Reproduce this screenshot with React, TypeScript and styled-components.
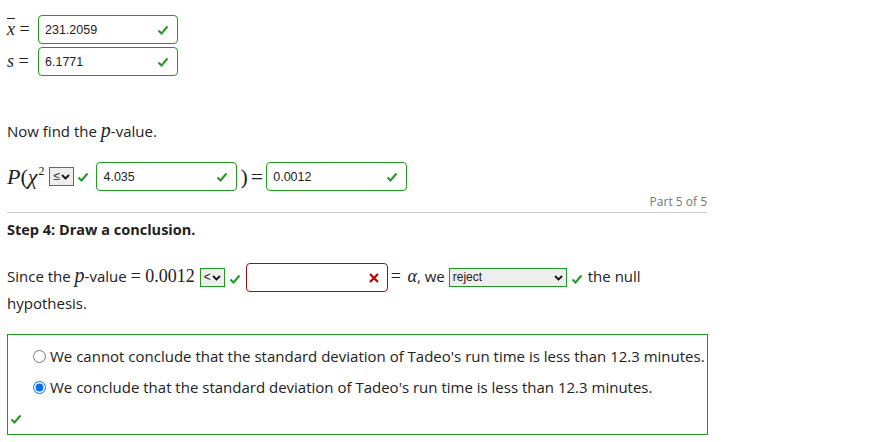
import React from "react";
import styled, { createGlobalStyle } from "styled-components";

const Global = createGlobalStyle`
  body {
    margin: 0;
    background: #fff;
    font-family: "Open Sans", "Noto Sans", sans-serif;
    color: #222;
  }
`;

const GREEN = "#1f9a1f";

const Check = ({ size = 12 }: { size?: number }) => (
  <svg width={size} height={size} viewBox="0 0 12 12" style={{ verticalAlign: "middle" }}>
    <path d="M1.5 6.5 L4.5 9.5 L10.5 2.5" fill="none" stroke={GREEN} strokeWidth="2" />
  </svg>
);

const Cross = () => (
  <svg width="10" height="10" viewBox="0 0 10 10">
    <path d="M1 1 L9 9 M9 1 L1 9" stroke="#b00" strokeWidth="2.2" />
  </svg>
);

const Caret = () => (
  <svg width="9" height="6" viewBox="0 0 9 6">
    <path d="M1 1 L4.5 4.5 L8 1" fill="none" stroke="#111" strokeWidth="1.8" />
  </svg>
);

function App() {
  return (
    <Page>
      <Global />
      <StatRow>
        <Math>
          <Over>x</Over> =
        </Math>
        <AnswerBox $w={140}>
          <span>231.2059</span>
          <Check />
        </AnswerBox>
      </StatRow>
      <StatRow>
        <Math>
          <i>s</i> =
        </Math>
        <AnswerBox $w={140}>
          <span>6.1771</span>
          <Check />
        </AnswerBox>
      </StatRow>

      <Prompt>
        Now find the <Var>p</Var>-value.
      </Prompt>

      <ProbRow>
        <BigMath>
          <i>P</i>(<i>χ</i>
          <Sup>2</Sup>
        </BigMath>
        <Select $w={25}>
          <span>≤</span>
          <Caret />
        </Select>
        <Check />
        <Gap $w={1} />
        <AnswerBox $w={141}>
          <span>4.035</span>
          <Check />
        </AnswerBox>
        <BigMath>)</BigMath>
        <BigMath>=</BigMath>
        <AnswerBox $w={141}>
          <span>0.0012</span>
          <Check />
        </AnswerBox>
      </ProbRow>

      <PartLabel>Part 5 of 5</PartLabel>
      <Rule />

      <StepTitle>Step 4: Draw a conclusion.</StepTitle>

      <Sentence>
        Since the <Var>p</Var>-value<MathInline $lead={4}>= 0.0012</MathInline>
        <Select $w={25} $gap={5}>
          <span>&lt;</span>
          <Caret />
        </Select>
        <Tick>
          <Check />
        </Tick>
        <AnswerBox $w={142} $bad $inline>
          <span />
          <Cross />
        </AnswerBox>
        <MathInline>
          = <Alpha>α</Alpha>
        </MathInline>
        , we
        <Select $w={118} $gap={4}>
          <span>reject</span>
          <Caret />
        </Select>
        <Tick>
          <Check />
        </Tick>
        the null hypothesis.
      </Sentence>

      <ChoiceBox>
        <Choice>
          <Radio type="radio" name="c" readOnly />
          We cannot conclude that the standard deviation of Tadeo's run time is less than 12.3 minutes.
        </Choice>
        <Choice>
          <Radio type="radio" name="c" readOnly checked />
          We conclude that the standard deviation of Tadeo's run time is less than 12.3 minutes.
        </Choice>
        <BoxCheck>
          <Check />
        </BoxCheck>
      </ChoiceBox>
    </Page>
  );
}

const Page = styled.div`
  width: 700px;
  padding: 15px 0 0 7px;
`;

const StatRow = styled.div`
  display: flex;
  align-items: center;
  height: 29px;
  margin-bottom: 3px;
`;

const Math = styled.span`
  font-family: "Liberation Serif", serif;
  font-size: 18px;
  width: 31px;
  white-space: nowrap;
  i {
    font-style: italic;
  }
`;

const Over = styled.i`
  text-decoration: overline;
`;

const AnswerBox = styled.div<{ $w: number; $bad?: boolean; $inline?: boolean }>`
  box-sizing: border-box;
  width: ${(p) => p.$w}px;
  height: 29px;
  border: 1px solid ${(p) => (p.$bad ? "#9a1010" : GREEN)};
  border-radius: 4px;
  display: ${(p) => (p.$inline ? "inline-flex" : "flex")};
  vertical-align: middle;
  margin: ${(p) => (p.$inline ? "-2px 2px -2px 0" : "0")};
  align-items: center;
  justify-content: space-between;
  padding: 0 8px 0 6px;
  font-family: "Liberation Sans", Arial, sans-serif;
  font-size: 12.5px;
  color: #222;
`;

const Prompt = styled.div`
  margin-top: 44px;
  font-size: 15px;
  line-height: 20px;
`;

const Var = styled.i`
  font-family: "Liberation Serif", serif;
  font-size: 20px;
`;

const ProbRow = styled.div`
  display: flex;
  align-items: center;
  margin-top: 21px;
  height: 29px;
  gap: 3px;
`;

const BigMath = styled.span`
  font-family: "Liberation Serif", serif;
  font-size: 22px;
  white-space: nowrap;
  i {
    font-style: italic;
  }
`;

const Sup = styled.sup`
  font-size: 12px;
  margin-left: 1px;
  margin-right: 2px;
`;

const Select = styled.div<{ $w: number; $gap?: number }>`
  box-sizing: border-box;
  width: ${(p) => p.$w}px;
  height: 19px;
  border: 1px solid ${GREEN};
  background: #eee;
  display: inline-flex;
  align-items: center;
  justify-content: space-between;
  padding: 0 3px;
  margin-left: ${(p) => p.$gap ?? 0}px;
  font-family: "Liberation Sans", Arial, sans-serif;
  font-size: 12px;
  line-height: 17px;
  color: #222;
  vertical-align: middle;
`;

const Gap = styled.span<{ $w: number }>`
  display: inline-block;
  width: ${(p) => p.$w}px;
`;

const Tick = styled.span`
  display: inline-block;
  margin: 0 5px 0 4px;
  line-height: 12px;
  vertical-align: middle;
`;

const Alpha = styled.i`
  margin-left: 2px;
`;

const PartLabel = styled.div`
  margin-top: 2px;
  text-align: right;
  font-size: 12px;
  color: #777;
  line-height: 17px;
`;

const Rule = styled.hr`
  margin: 2px 0 0;
  border: none;
  border-top: 1px solid #ccc;
`;

const StepTitle = styled.div`
  margin-top: 7px;
  font-size: 14.5px;
  font-weight: 700;
  line-height: 20px;
`;

const Sentence = styled.div`
  margin-top: 22px;
  font-size: 15px;
  line-height: 27px;
`;

const MathInline = styled.span<{ $lead?: number }>`
  font-family: "Liberation Serif", serif;
  font-size: 18px;
  margin-left: ${(p) => p.$lead ?? 1}px;
`;

const ChoiceBox = styled.div`
  margin-top: 17px;
  box-sizing: border-box;
  width: 701px;
  height: 101px;
  border: 1px solid ${GREEN};
  padding: 11px 0 0 24px;
  position: relative;
`;

const Choice = styled.label`
  display: flex;
  align-items: center;
  font-size: 15px;
  line-height: 20px;
  margin-bottom: 11px;
`;

const Radio = styled.input`
  width: 13px;
  height: 13px;
  margin: 0 4px 0 1px;
  accent-color: #0a6cf0;
`;

const BoxCheck = styled.div`
  position: absolute;
  left: 2px;
  bottom: 6px;
`;

export default App;
